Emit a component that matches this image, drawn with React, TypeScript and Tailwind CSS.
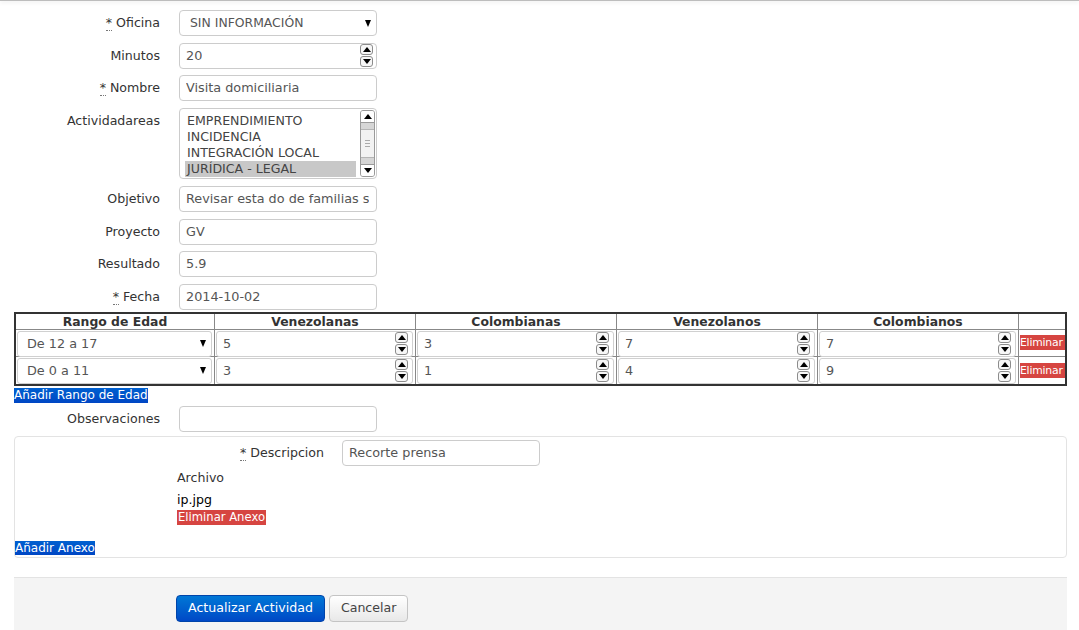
import React from 'react';

const font = { fontFamily: '"DejaVu Sans", "Liberation Sans", sans-serif' };

// little up/down arrows of a number input
const Spinner: React.FC = () => (
  <div className="flex flex-col gap-px w-[13px] shrink-0">
    <div className="h-[11px] border border-[#8c8c8c] rounded-[3px] bg-[#f7f7f7] flex items-center justify-center">
      <span className="w-0 h-0 border-l-[4px] border-r-[4px] border-b-[5px] border-l-transparent border-r-transparent border-b-black" />
    </div>
    <div className="h-[11px] border border-[#8c8c8c] rounded-[3px] bg-[#f7f7f7] flex items-center justify-center">
      <span className="w-0 h-0 border-l-[4px] border-r-[4px] border-t-[5px] border-l-transparent border-r-transparent border-t-black" />
    </div>
  </div>
);

const Caret: React.FC = () => (
  <span className="w-0 h-0 border-l-[3.5px] border-r-[3.5px] border-t-[7px] border-l-transparent border-r-transparent border-t-black" />
);

const Req: React.FC = () => (
  <abbr className="no-underline border-b border-dotted border-[#777] leading-[12px] mr-[4px]">*</abbr>
);

interface RowProps {
  label: string;
  req?: boolean;
  children: React.ReactNode;
}

const Row: React.FC<RowProps> = ({ label, req, children }) => (
  <div className="flex items-start gap-[19px]">
    <div className="w-[146px] shrink-0 text-right leading-[26px] text-[#333] text-[12.6px]">
      {req && <Req />}
      {label}
    </div>
    {children}
  </div>
);

const TextBox: React.FC<{ value?: string; spin?: boolean }> = ({ value, spin }) => (
  <div className="w-[198px] h-[26px] border border-[#cccccc] rounded-[4px] pl-[6px] pr-[3px] flex items-center justify-between text-[#555] text-[12.8px] bg-white">
    <span className="whitespace-nowrap overflow-hidden">{value}</span>
    {spin && <Spinner />}
  </div>
);

const cellNum = (v: string) => (
  <div className="h-[26px] border border-[#d0d0d0] rounded-[3px] pl-[6px] pr-[4px] flex items-center justify-between text-[#555] text-[12.8px] bg-white">
    <span>{v}</span>
    <Spinner />
  </div>
);

const rows = [
  { rango: 'De 12 a 17', vals: ['5', '3', '7', '7'] },
  { rango: 'De 0 a 11', vals: ['3', '1', '4', '9'] },
];

export default function App() {
  return (
    <div className="min-h-[630px] bg-white text-[12px] text-[#333]" style={font}>
      {/* shadow of the bar above */}
      <div className="h-px bg-[#bdbdbd] shadow-[0_1px_4px_rgba(0,0,0,0.18)]" />

      <div className="pl-[14px] pr-[12px] pt-[9px]">
        <div className="flex flex-col gap-[6.5px]">
          <Row label="Oficina" req>
            <div className="w-[198px] h-[26px] border border-[#cccccc] rounded-[4px] pl-[10px] pr-[5px] flex items-center justify-between text-[#555] text-[12.4px]">
              <span>SIN INFORMACIÓN</span>
              <Caret />
            </div>
          </Row>
          <Row label="Minutos">
            <TextBox value="20" spin />
          </Row>
          <Row label="Nombre" req>
            <TextBox value="Visita domiciliaria" />
          </Row>
          <Row label="Actividadareas">
            <div className="w-[198px] h-[71px] border border-[#cccccc] rounded-[4px] flex pl-[5px] pr-[1px] py-[3px] mb-[1px]">
              <div className="flex-1 flex flex-col text-[#444] text-[12.6px] leading-[16px] pt-[1px]">
                <span className="pl-[2px]">EMPRENDIMIENTO</span>
                <span className="pl-[2px]">INCIDENCIA</span>
                <span className="pl-[2px]">INTEGRACIÓN LOCAL</span>
                <span className="pl-[2px] bg-[#c8c8c8] mr-[4px]">JURÍDICA - LEGAL</span>
              </div>
              <div className="w-[15px] -my-[2px] border border-[#9a9a9a] rounded-[3px] flex flex-col bg-[#e8e8e8] overflow-hidden">
                <div className="h-[12px] bg-white border-b border-[#9a9a9a] flex items-center justify-center">
                  <span className="w-0 h-0 border-l-[4px] border-r-[4px] border-b-[5px] border-l-transparent border-r-transparent border-b-black" />
                </div>
                <div className="h-[6px] bg-[#d6d6d6]" />
                <div className="flex-1 bg-[#f2f2f2] border-y border-[#b5b5b5] flex flex-col items-center justify-center gap-[2px]">
                  <span className="w-[5px] h-px bg-[#aaa]" />
                  <span className="w-[5px] h-px bg-[#aaa]" />
                  <span className="w-[5px] h-px bg-[#aaa]" />
                </div>
                <div className="h-[6px] bg-[#d6d6d6]" />
                <div className="h-[12px] bg-white border-t border-[#9a9a9a] flex items-center justify-center">
                  <span className="w-0 h-0 border-l-[4px] border-r-[4px] border-t-[5px] border-l-transparent border-r-transparent border-t-black" />
                </div>
              </div>
            </div>
          </Row>
          <Row label="Objetivo">
            <TextBox value="Revisar esta do de familias s" />
          </Row>
          <Row label="Proyecto">
            <TextBox value="GV" />
          </Row>
          <Row label="Resultado">
            <TextBox value="5.9" />
          </Row>
          <Row label="Fecha" req>
            <TextBox value="2014-10-02" />
          </Row>
        </div>

        {/* age ranges table */}
        <div className="mt-[2px] w-[1053px] border-2 border-[#333]">
          <div className="flex border-b border-[#888] h-[16px] font-bold text-[12.4px] leading-[15px]">
            {['Rango de Edad', 'Venezolanas', 'Colombianas', 'Venezolanos', 'Colombianos'].map((h, i) => (
              <div key={h} className={`${i === 0 ? 'w-[199px]' : 'w-[201px]'} shrink-0 border-r border-[#888] text-center text-[#333]`}>
                {h}
              </div>
            ))}
            <div className="flex-1" />
          </div>
          {rows.map((r, ri) => (
            <div key={r.rango} className={`flex h-[27px] ${ri === 0 ? 'border-b border-[#888]' : ''}`}>
              <div className="w-[199px] shrink-0 border-r border-[#888] pl-px pr-[2px] pt-px">
                <div className="h-[26px] border border-[#d0d0d0] rounded-[3px] pl-[9px] pr-[5px] flex items-center justify-between text-[#555] text-[12.8px]">
                  <span>{r.rango}</span>
                  <Caret />
                </div>
              </div>
              {r.vals.map((v, vi) => (
                <div key={vi} className="w-[201px] shrink-0 border-r border-[#888] pl-px pr-[2px] pt-px">
                  {cellNum(v)}
                </div>
              ))}
              <div className="flex-1 min-w-0 flex items-center pl-px">
                <span className="bg-[#d64541] text-white leading-[15px] w-full whitespace-nowrap text-[10.8px] tracking-[-0.2px]">Eliminar</span>
              </div>
            </div>
          ))}
        </div>
        <div className="h-[15px]">
          <span className="bg-gradient-to-b from-[#0060d0] to-[#0046c4] text-white leading-[15px] inline-block">Añadir Rango de Edad</span>
        </div>

        <div className="mt-[5px]">
          <Row label="Observaciones">
            <TextBox />
          </Row>
        </div>

        {/* attachments well */}
        <div className="mt-[4px] w-[1053px] h-[122px] border border-[#e3e3e3] rounded-[4px] flex flex-col">
          <div className="pt-[3px] flex items-start gap-[18px]">
            <div className="w-[309px] shrink-0 text-right leading-[26px] text-[12.6px]">
              <Req />
              Descripcion
            </div>
            <div className="w-[198px] h-[26px] border border-[#cccccc] rounded-[4px] pl-[6px] flex items-center text-[#555] text-[12.8px]">
              Recorte prensa
            </div>
          </div>
          <div className="pl-[162px] mt-[4px] leading-[15px] text-[12.6px]">Archivo</div>
          <div className="pl-[162px] mt-[7px] leading-[15px] text-black text-[12.6px]">ip.jpg</div>
          <div className="pl-[162px] mt-[1px]">
            <span className="bg-[#d64541] text-white leading-[15px] inline-block px-px text-[11.6px]">Eliminar Anexo</span>
          </div>
          <div className="mt-auto">
            <span className="bg-gradient-to-b from-[#0060d0] to-[#0046c4] text-white leading-[14px] inline-block">Añadir Anexo</span>
          </div>
        </div>

        {/* actions */}
        <div className="mt-[19px] w-[1053px] h-[60px] bg-[#f4f4f4] border-t border-[#e3e3e3] flex items-start pl-[162px] pt-[17px] gap-[4px]">
          <button className="h-[27px] px-[11px] rounded-[4px] border border-[#0044aa] bg-gradient-to-b from-[#0077d6] to-[#0048c6] text-white text-[12.6px]">
            Actualizar Actividad
          </button>
          <button className="h-[27px] px-[11px] rounded-[4px] border border-[#c4c4c4] bg-gradient-to-b from-white to-[#e8e8e8] text-[#444] text-[12.6px]">
            Cancelar
          </button>
        </div>
      </div>
    </div>
  );
}
